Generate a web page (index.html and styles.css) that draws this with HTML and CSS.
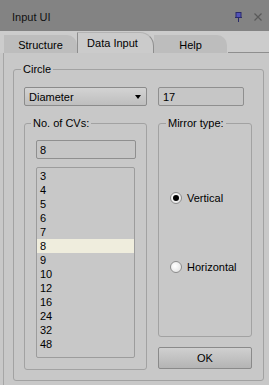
FILE: index.html
```html
<!DOCTYPE html>
<html lang="en">
<head>
    <meta charset="UTF-8">
    <title>Input UI</title>
    <link rel="stylesheet" href="styles.css">
</head>
<body>

    <!-- Barre de titre -->
    <div class="titlebar">
        <span class="title">Input UI</span>
        <span class="title-icons">
            <svg width="7" height="10" viewBox="0 0 7 10">
                <rect x="1" y="0.5" width="5" height="5" fill="#5252b8" stroke="#2a2a6a" stroke-width="1"/>
                <rect x="0" y="5" width="7" height="1" fill="#2a2a6a"/>
                <rect x="3" y="6" width="1" height="4" fill="#2a2a6a"/>
            </svg>
            <svg width="8" height="8" viewBox="0 0 8 8">
                <path d="M0.5 0.5 L7.5 7.5 M7.5 0.5 L0.5 7.5" stroke="#5a5a5a" stroke-width="1.2"/>
            </svg>
        </span>
    </div>

    <!-- Onglets -->
    <div class="tabs">
        <div class="tab">Structure</div>
        <div class="tab active">Data Input</div>
        <div class="tab">Help</div>
        <div class="tab-rest"></div>
    </div>

    <div class="page">
        <fieldset class="group circle">
            <legend>Circle</legend>

            <div class="row">
                <div class="combo">
                    <span>Diameter</span>
                    <span class="arrow"></span>
                </div>
                <div class="field size">17</div>
            </div>

            <div class="row cols">
                <fieldset class="group cvs">
                    <legend>No. of CVs:</legend>
                    <div class="field count">8</div>
                    <ul class="list">
                        <li>3</li>
                        <li>4</li>
                        <li>5</li>
                        <li>6</li>
                        <li>7</li>
                        <li class="selected">8</li>
                        <li>9</li>
                        <li>10</li>
                        <li>12</li>
                        <li>16</li>
                        <li>24</li>
                        <li>32</li>
                        <li>48</li>
                    </ul>
                </fieldset>

                <div class="side">
                    <fieldset class="group mirror">
                        <legend>Mirror type:</legend>
                        <label class="radio"><span class="dot checked"></span>Vertical</label>
                        <label class="radio"><span class="dot"></span>Horizontal</label>
                    </fieldset>
                    <button class="btn">OK</button>
                </div>
            </div>
        </fieldset>
    </div>

</body>
</html>
```

FILE: styles.css
```css
body {
    margin: 0;
    width: 269px;
    height: 385px;
    overflow: hidden;
    background: #c8c8c8;
    font-family: "Liberation Sans", Arial, sans-serif;
    font-size: 11px;
    color: #000;
}

* {
    box-sizing: border-box;
}

/* Barre de titre */
.titlebar {
    height: 31px;
    background: #838383;
    display: flex;
    align-items: center;
    padding: 2px 7px 0 12px;
    color: #111;
}

.title-icons {
    margin-left: auto;
    display: flex;
    align-items: center;
    gap: 12px;
}

/* Onglets */
.tabs {
    display: flex;
    align-items: flex-end;
    height: 22px;
    padding-left: 4px;
    background: #cccccc;
}

.tab {
    width: 73px;
    height: 18px;
    background: #bdbdbd;
    border-top-right-radius: 10px;
    display: flex;
    align-items: center;
    justify-content: center;
    padding-top: 1px;
}

.tab.active {
    width: 77px;
    height: 21px;
    background: #cbcbcb;
    border-left: 1px solid #8e8e8e;
    border-right: 1px solid #8e8e8e;
    border-top: 1px solid #b4b4b4;
    border-top-right-radius: 14px;
    padding-top: 0;
    padding-right: 6px;
}

.tab-rest {
    flex: 1;
    height: 1px;
    background: #8e8e8e;
    margin-left: 1px;
}

/* Panneau */
.page {
    margin-left: 3px;
    height: 332px;
    border-left: 1px solid #a6a6a6;
    padding: 10px 0 0 9px;
}

fieldset.group {
    margin: 0;
    min-width: 0;
    border: 1px solid #a2a2a2;
    border-radius: 3px;
}

legend {
    padding: 0 2px;
    line-height: 13px;
}

.circle {
    width: 251px;
    height: 318px;
    padding: 11px 0 0 10px;
}

.circle > legend {
    margin-left: -3px;
}

.row {
    display: flex;
    gap: 11px;
}

.cols {
    margin-top: 11px;
}

.combo {
    width: 123px;
    height: 19px;
    border: 1px solid #8b8b8b;
    border-radius: 2px;
    background: linear-gradient(#d3d3d3, #bebebe);
    display: flex;
    align-items: center;
    padding-left: 4px;
}

.arrow {
    margin-left: auto;
    margin-right: 5px;
    width: 0;
    height: 0;
    border-left: 3px solid transparent;
    border-right: 3px solid transparent;
    border-top: 4px solid #000;
}

.field {
    height: 19px;
    border: 1px solid #8f8f8f;
    border-radius: 2px;
    background: #c6c6c6;
    display: flex;
    align-items: center;
    padding-left: 4px;
}

.size {
    width: 86px;
}

.cvs {
    width: 123px;
    height: 253px;
    padding: 10px 0 0 11px;
}

.cvs > legend {
    margin-left: -5px;
}

.count {
    width: 100px;
    padding-left: 3px;
}

.list {
    list-style: none;
    margin: 8px 0 0;
    padding: 1px 0 0;
    width: 99px;
    height: 191px;
    border: 1px solid #9c9c9c;
    border-radius: 2px;
}

.list li {
    height: 14px;
    line-height: 14px;
    padding-left: 3px;
}

.list li.selected {
    background: #efeddd;
}

.side {
    display: flex;
    flex-direction: column;
}

.mirror {
    width: 94px;
    height: 220px;
    padding: 61px 0 0 11px;
    display: flex;
    flex-direction: column;
    gap: 55px;
}

.mirror > legend {
    margin-left: -4px;
}

.radio {
    display: flex;
    align-items: center;
    height: 14px;
}

.dot {
    width: 12px;
    height: 12px;
    border-radius: 50%;
    border: 1px solid #8c8c8c;
    background: radial-gradient(circle at 40% 40%, #ffffff, #dedede);
    margin-right: 5px;
    display: flex;
    align-items: center;
    justify-content: center;
}

.dot.checked::after {
    content: "";
    width: 6px;
    height: 6px;
    border-radius: 50%;
    background: #000;
}

.btn {
    margin-top: 10px;
    width: 94px;
    height: 22px;
    border: 1px solid #8a8a8a;
    border-radius: 2px;
    background: linear-gradient(#d0d0d0, #b4b4b4);
    font-family: inherit;
    font-size: 11px;
    color: #000;
    padding: 0;
}
```
